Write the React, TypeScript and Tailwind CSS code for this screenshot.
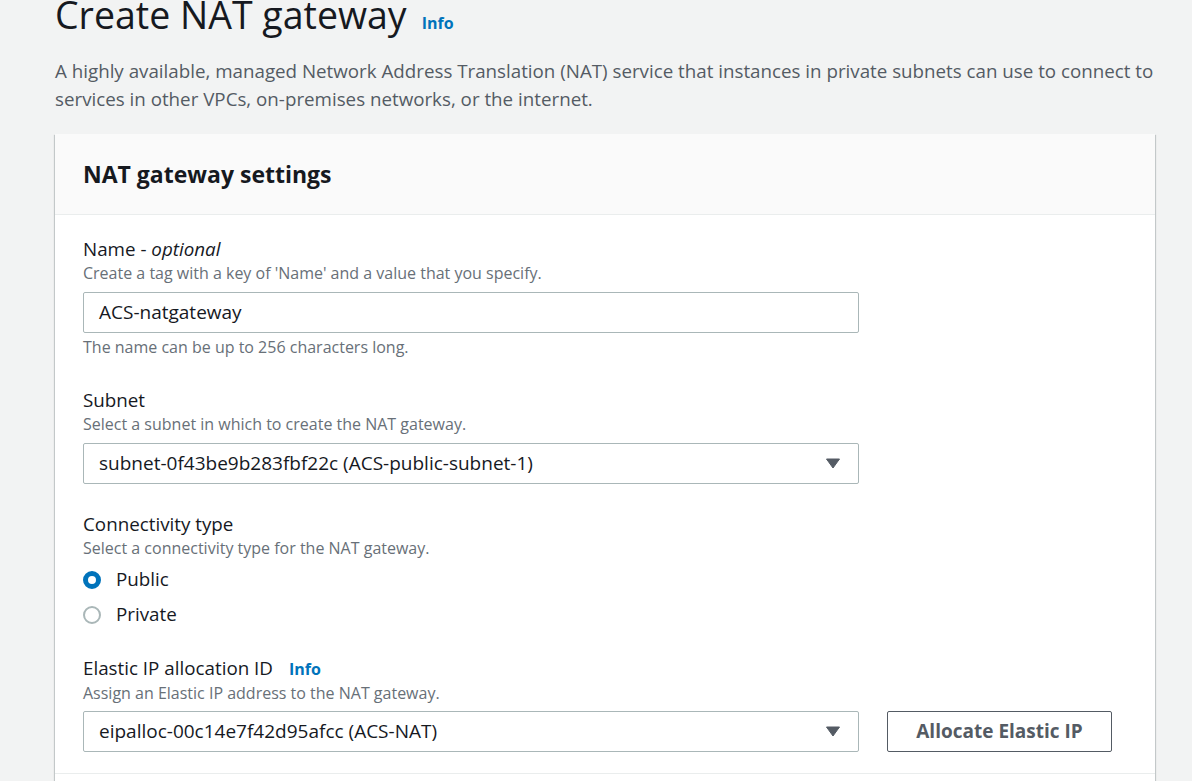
import React from 'react';

const font = { fontFamily: '"Open Sans", "Noto Sans", Arial, sans-serif' };

function Caret() {
  return (
    <svg width="14" height="11" viewBox="0 0 14 11" className="shrink-0">
      <path d="M0.5 1 L13.5 1 L7 10 Z" fill="#545b64" stroke="#545b64" strokeLinejoin="round" />
    </svg>
  );
}

function Field({ label, desc, children }: { label: React.ReactNode; desc: string; children: React.ReactNode }) {
  return (
    <div>
      <div className="text-[18.8px] leading-[24px] text-[#16191f]">{label}</div>
      <div className="text-[16px] leading-[24px] text-[#687078]">{desc}</div>
      <div className="mt-[7px]">{children}</div>
    </div>
  );
}

function SelectBox({ value }: { value: string }) {
  return (
    <div className="w-[776px] h-[41px] border border-[#aab7b8] rounded-[2px] bg-white flex items-center justify-between pl-[15px] pr-[18px]">
      <span className="text-[19px] text-[#16191f]">{value}</span>
      <Caret />
    </div>
  );
}

function Radio({ checked, label }: { checked?: boolean; label: string }) {
  return (
    <div className="flex items-center h-[35px]">
      {checked ? (
        <span className="w-[18px] h-[18px] rounded-full border-[5px] border-[#0073bb] bg-white" />
      ) : (
        <span className="w-[18px] h-[18px] rounded-full border-2 border-[#aab7b8] bg-white" />
      )}
      <span className="ml-[15px] text-[18.8px] text-[#16191f]">{label}</span>
    </div>
  );
}

export default function App() {
  return (
    <div className="h-[781px] bg-[#f2f3f3] pl-[55px] pr-[37px] overflow-hidden" style={font}>
      {/* Page header */}
      <div className="flex items-baseline gap-[15px] h-[30px]">
        <h1 className="text-[37.5px] leading-[30px] text-[#16191f]">Create NAT gateway</h1>
        <a href="#" className="text-[16px] leading-[12px] font-bold text-[#0073bb]">Info</a>
      </div>
      <p className="mt-[27px] text-[18.75px] leading-[28px] text-[#545b64]">
        A highly available, managed Network Address Translation (NAT) service that instances in private subnets can use to connect to
        services in other VPCs, on-premises networks, or the internet.
      </p>

      {/* Settings card */}
      <div className="mt-[21px] bg-white shadow-[0_1px_1px_0_rgba(0,28,36,0.3),1px_1px_1px_0_rgba(0,28,36,0.15),-1px_1px_1px_0_rgba(0,28,36,0.15)]">
        <div className="h-[81px] bg-[#fafafa] border-b border-[#eaeded] px-[28px] flex items-center">
          <h2 className="text-[23px] font-bold text-[#16191f]">NAT gateway settings</h2>
        </div>
        <div className="px-[28px] pt-[22px] pb-[21px] flex flex-col">
          <div>
            <Field label={<>Name - <i>optional</i></>} desc="Create a tag with a key of 'Name' and a value that you specify.">
              <div className="w-[776px] h-[41px] border border-[#aab7b8] rounded-[2px] bg-white flex items-center px-[15px]">
                <span className="text-[19px] text-[#16191f]">ACS-natgateway</span>
              </div>
            </Field>
            <div className="mt-[2px] text-[16px] leading-[24px] text-[#687078]">The name can be up to 256 characters long.</div>
          </div>

          <div className="mt-[29px]">
            <Field label="Subnet" desc="Select a subnet in which to create the NAT gateway.">
              <SelectBox value="subnet-0f43be9b283fbf22c (ACS-public-subnet-1)" />
            </Field>
          </div>

          <div className="mt-[28px]">
            <div className="text-[18.8px] leading-[24px] text-[#16191f]">Connectivity type</div>
            <div className="text-[16px] leading-[24px] text-[#687078]">Select a connectivity type for the NAT gateway.</div>
            <div className="mt-[2px]">
              <Radio checked label="Public" />
              <Radio label="Private" />
            </div>
          </div>

          <div className="mt-[24px]">
            <Field
              label={
                <span className="flex items-baseline gap-[16px]">
                  Elastic IP allocation ID
                  <a href="#" className="text-[16px] font-bold text-[#0073bb]">Info</a>
                </span>
              }
              desc="Assign an Elastic IP address to the NAT gateway."
            >
              <div className="flex items-center gap-[28px] -mt-[1px]">
                <SelectBox value="eipalloc-00c14e7f42d95afcc (ACS-NAT)" />
                <button className="w-[225px] h-[41px] border border-[#545b64] rounded-[2px] bg-white text-[19px] font-bold text-[#545b64]">
                  Allocate Elastic IP
                </button>
              </div>
            </Field>
          </div>
        </div>
        <div className="border-t border-[#eaeded] h-[20px]" />
      </div>
    </div>
  );
}
